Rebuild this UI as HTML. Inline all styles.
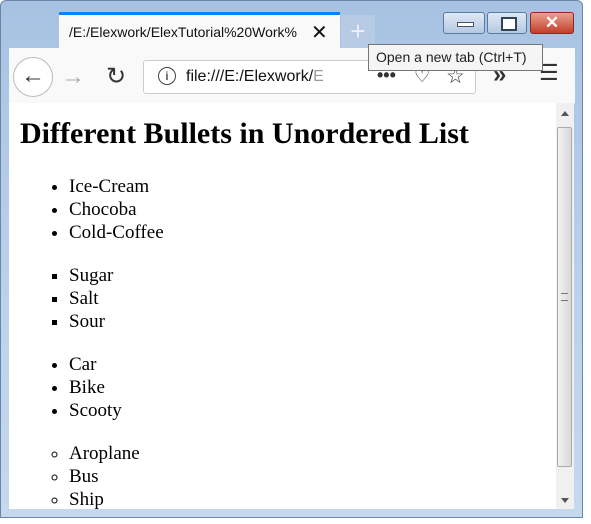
<!DOCTYPE html>
<html><head><style>
body{margin:0;width:591px;height:524px;overflow:hidden;background:#fff;position:relative;font-family:"Liberation Sans",sans-serif}
.frame{position:absolute;left:0;top:0;width:583px;height:518px;background:linear-gradient(#a7c2e2,#bcd2ec 60%,#c4d8ee);border:1px solid #6b85a4;border-radius:6px 6px 0 0;box-sizing:border-box}
.tab{position:absolute;left:59px;top:12px;width:281px;height:37px;background:#f9f9fa;border-top:3px solid #0a84ff;box-sizing:border-box;font-size:14px;color:#111}
.tab span{position:absolute;left:10px;top:9px;white-space:nowrap;width:230px;overflow:hidden}
.tab b{position:absolute;left:252px;top:5px;font-weight:normal;font-size:20px}
.plus{position:absolute;left:341px;top:15px;width:34px;height:34px;background:#b7cbe4;color:#eef;font-size:26px;text-align:center;line-height:32px}
.nav{position:absolute;left:9px;top:48px;width:566px;height:55px;background:#f9f9fa;border-bottom:1px solid #ddd}
.url{position:absolute;left:134px;top:12px;width:333px;height:34px;border:1px solid #ccc;border-radius:3px;background:#fff;box-sizing:border-box}
.content{position:absolute;left:9px;top:103px;width:547px;height:406px;background:#fff;overflow:hidden;font-family:"Liberation Serif",serif}
.sb{position:absolute;left:556px;top:103px;width:18px;height:406px;background:#f0f0f0}
.thumb{position:absolute;left:1px;top:24px;width:15px;height:340px;background:linear-gradient(90deg,#f2f2f2,#d8d8d8);border:1px solid #aaa;border-radius:2px;box-sizing:border-box}
h1{margin:0;position:absolute;left:11px;top:14px;font-size:30px;white-space:nowrap}
ul{position:absolute;left:20px;margin:0;padding-left:40px;font-size:19px;line-height:23px}
.btn{position:absolute;top:12px;height:22px;border:1px solid #5b7aa0;border-radius:3px;background:linear-gradient(#dfe9f5,#b5c9e2);box-sizing:border-box}
.tip{position:absolute;left:368px;top:44px;width:175px;height:27px;background:#f5f5f5;border:1px solid #767676;font-size:14px;line-height:25px;padding-left:7px;box-sizing:border-box;color:#222}
</style></head><body>
<div class="frame"></div>
<div class="btn" style="left:443px;width:42px"><div style="position:absolute;left:13px;top:9px;width:15px;height:3px;background:#fff;border:1px solid #456"></div></div>
<div class="btn" style="left:487px;width:40px"><div style="position:absolute;left:13px;top:4px;width:12px;height:10px;border:2px solid #345;background:#fff"></div></div>
<div class="btn" style="left:530px;width:44px;background:linear-gradient(#e8a090,#c2402a);border-color:#8a2a20;color:#fff;font-weight:bold;font-size:17px;text-align:center;line-height:20px">✕</div>
<div class="tab"><span>/E:/Elexwork/ElexTutorial%20Work%</span><b>✕</b></div>
<div class="plus">+</div>
<div class="nav">
<div style="position:absolute;left:4px;top:9px;width:38px;height:38px;border:1px solid #bbb;border-radius:50%;background:#fff;font-size:24px;text-align:center;line-height:36px;color:#333">←</div>
<div style="position:absolute;left:52px;top:15px;font-size:24px;color:#aaa">→</div>
<div style="position:absolute;left:97px;top:14px;font-size:24px;color:#333">↻</div>
<div class="url"><span style="position:absolute;left:14px;top:6px;width:16px;height:16px;border:1.5px solid #444;border-radius:50%;font-size:12px;text-align:center;line-height:16px">i</span><span style="position:absolute;left:42px;top:7px;font-size:16px;color:#111">file:///E:/Elexwork/<span style="color:#999">E</span></span>
<span style="position:absolute;left:233px;top:4px;font-size:18px;color:#333;font-weight:bold">•••</span>
<span style="position:absolute;left:270px;top:5px;font-size:18px;color:#333">♡</span>
<span style="position:absolute;left:302px;top:3px;font-size:21px;color:#333">☆</span></div>
<div style="position:absolute;left:484px;top:13px;font-size:24px;color:#333;font-weight:bold">»</div>
<div style="position:absolute;left:530px;top:12px;font-size:22px;color:#333">☰</div>
</div>
<div class="tip">Open a new tab (Ctrl+T)</div>
<div class="content">
<h1>Different Bullets in Unordered List</h1>
<ul style="top:72px;list-style:disc"><li>Ice-Cream</li><li>Chocoba</li><li>Cold-Coffee</li></ul>
<ul style="top:161px;list-style:square"><li>Sugar</li><li>Salt</li><li>Sour</li></ul>
<ul style="top:250px;list-style:disc"><li>Car</li><li>Bike</li><li>Scooty</li></ul>
<ul style="top:339px;list-style:circle"><li>Aroplane</li><li>Bus</li><li>Ship</li></ul>
</div>
<div class="sb"><div style="position:absolute;left:5px;top:8px;border:4px solid transparent;border-bottom:5px solid #555;border-top:0"></div><div class="thumb"><div style="position:absolute;left:3px;top:165px;width:7px;height:6px;border-top:1px solid #777;border-bottom:1px solid #777"></div></div><div style="position:absolute;left:5px;top:395px;border:4px solid transparent;border-top:5px solid #555;border-bottom:0"></div></div>
</body></html>
